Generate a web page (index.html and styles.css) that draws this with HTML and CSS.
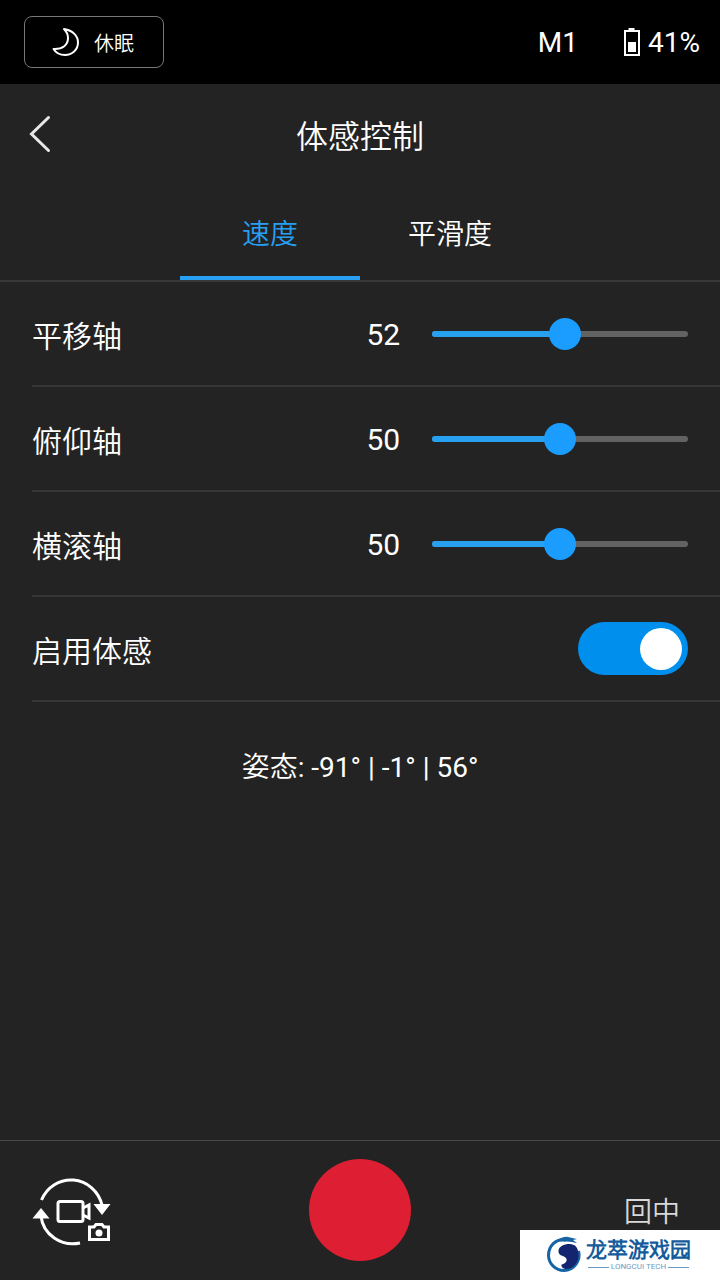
FILE: index.html
```html
<!DOCTYPE html>
<html lang="zh-CN">
<head>
<meta charset="utf-8">
<meta name="viewport" content="width=device-width, initial-scale=1">
<title>体感控制</title>
<link rel="stylesheet" href="styles.css">
</head>
<body class="app">
  <header class="status">
    <button class="sleep" type="button">
      <svg class="sleep-icon" viewBox="0 0 28 30" aria-hidden="true"><path d="M12 2C21 3.500 26 9 26 15.500C26 23 20 28 13 28C8 28 4 26 1.500 22C10 22.500 16 18.500 16 11C16 7.500 14.500 4.500 12 2Z"/></svg>
      <span>休眠</span>
    </button>
    <div class="device">
      <span>M1</span>
      <span class="battery">
        <svg class="battery-icon" viewBox="0 0 16 28" aria-hidden="true"><path d="M4.500 0h6v2.500h-6z"/><path fill-rule="evenodd" d="M0 2h16v26H0zM2 4v22h12V4z"/><path d="M4 14h8v10H4z"/></svg>
        <span>41%</span>
      </span>
    </div>
  </header>

  <div class="titlebar">
    <button class="back" type="button" aria-label="返回">
      <svg class="back-icon" viewBox="0 0 22 38" aria-hidden="true"><path d="M19.500 2.500L2.500 19L19.500 35.500"/></svg>
    </button>
    <h1 class="title">体感控制</h1>
  </div>

  <nav class="tabs">
    <button class="tab tab-active" type="button">速度</button>
    <button class="tab" type="button">平滑度</button>
  </nav>

  <main class="content">
    <div class="settings">
      <div class="row">
        <label class="label" for="pan">平移轴</label>
        <output class="value" for="pan">52</output>
        <div class="slider">
          <div class="rail"><div class="fill" style="width: 52%"></div></div>
          <input class="range" id="pan" type="range" min="0" max="100" value="52">
        </div>
      </div>
      <div class="row">
        <label class="label" for="tilt">俯仰轴</label>
        <output class="value" for="tilt">50</output>
        <div class="slider">
          <div class="rail"><div class="fill" style="width: 50%"></div></div>
          <input class="range" id="tilt" type="range" min="0" max="100" value="50">
        </div>
      </div>
      <div class="row">
        <label class="label" for="roll">横滚轴</label>
        <output class="value" for="roll">50</output>
        <div class="slider">
          <div class="rail"><div class="fill" style="width: 50%"></div></div>
          <input class="range" id="roll" type="range" min="0" max="100" value="50">
        </div>
      </div>
      <div class="row">
        <label class="label" for="motion">启用体感</label>
        <input class="switch" id="motion" type="checkbox" checked>
      </div>
    </div>
    <p class="attitude">姿态<span class="angles">: -91° | -1° | 56°</span></p>
  </main>

  <footer class="controls">
    <button class="mode" type="button" aria-label="切换拍照和录像">
      <svg class="mode-icon" viewBox="0 0 80 74" aria-hidden="true">
        <g class="stroke">
          <path d="M9.500 27A32 33 0 0 1 70 32"/>
          <path d="M9 43A32 31 0 0 0 48 70"/>
          <rect x="26" y="28.500" width="25" height="20" rx="2"/>
          <path d="M51 35L57 32V45L51 42"/>
          <path d="M57.500 54H62L64 51.500H70L72 54H76.500V66.500H57.500Z"/>
        </g>
        <path class="solid" d="M61.500 31H78.500L70 42Z"/>
        <path class="solid" d="M.5 45.500H17.500L9 35Z"/>
        <circle class="solid" cx="67" cy="60" r="3.500"/>
      </svg>
    </button>
    <button class="record" type="button" aria-label="录制"></button>
    <button class="recenter" type="button">回中</button>
  </footer>

  <aside class="brand">
    <svg class="brand-icon" viewBox="0 0 36 38" aria-hidden="true">
      <path class="brand-ring" d="M20 4C10 2 2.500 10 2.500 19.500A15.500 15.500 0 0 0 18 34.500A15.500 15.500 0 0 0 32.500 15"/>
      <path class="brand-core" d="M31 12C35 21 31 32 21 33C17 33 15 31 15.500 28.500C19 28 22 25 20 22C17 19 12 20 12.500 14.500C13 8.500 24 6 29 9.500Z"/>
      <path class="brand-head" d="M10 5C16 1 20 0 24 1.500L31 3L27 4L31 7C24 5 18 6 10 5Z"/>
    </svg>
    <div class="brand-text">
      <span class="brand-name">龙萃游戏园</span>
      <span class="brand-sub">LONGCUI TECH</span>
    </div>
  </aside>
</body>
</html>
```
FILE: styles.css
```css
* {
  box-sizing: border-box;
}

.app {
  display: flex;
  flex-direction: column;
  min-height: 100vh;
  margin: 0;
  background: #232323;
  color: #fff;
  font-family: Roboto, "Noto Sans CJK SC DemiLight", "Noto Sans CJK SC", sans-serif;
  font-size: 30px;
  font-weight: 350;
}

button {
  padding: 0;
  border: 0;
  background: none;
  color: inherit;
  font: inherit;
}

svg {
  display: block;
}

.status {
  display: flex;
  align-items: center;
  justify-content: space-between;
  height: 84px;
  padding: 0 20px 0 24px;
  background: #000;
}

.sleep {
  display: flex;
  align-items: center;
  justify-content: center;
  gap: 14px;
  width: 140px;
  height: 52px;
  padding-right: 2px;
  border: 1px solid #777;
  border-radius: 8px;
  font-size: 20px;
}

.sleep-icon {
  width: 28px;
  height: 30px;
  fill: none;
  stroke: #fff;
  stroke-width: 2;
  stroke-linejoin: round;
}

.device {
  display: flex;
  align-items: center;
  gap: 46px;
  font-size: 28px;
  font-weight: 400;
}

.battery {
  display: flex;
  align-items: center;
  gap: 8px;
}

.battery-icon {
  width: 16px;
  height: 28px;
  fill: #fff;
}

.titlebar {
  display: grid;
  grid-template-columns: 1fr auto 1fr;
  align-items: center;
  height: 100px;
  padding: 0 29px;
}

.back {
  justify-self: start;
}

.back-icon {
  width: 22px;
  height: 38px;
  fill: none;
  stroke: #e8e8e8;
  stroke-width: 3;
  stroke-linecap: round;
}

.title {
  margin: 0;
  font-size: 32px;
  font-weight: 350;
}

.tabs {
  display: flex;
  justify-content: center;
  height: 98px;
  border-bottom: 2px solid #383838;
}

.tab {
  width: 25%;
  padding-top: 4px;
  border-bottom: 4px solid transparent;
  font-size: 28px;
}

.tab-active {
  border-color: #27a0f4;
  color: #27a0f4;
}

.content {
  flex: 1;
}

.settings {
  padding-left: 32px;
}

.row {
  display: flex;
  align-items: center;
  height: 105px;
  padding-right: 32px;
  border-bottom: 2px solid #363636;
}

.label {
  flex: 1;
}

.value {
  margin-right: 32px;
  padding-top: 2px;
  font-weight: 400;
}

.slider {
  display: grid;
  align-items: center;
  width: 39%;
}

.rail {
  grid-area: 1 / 1;
  height: 6px;
  border-radius: 3px;
  background: #626262;
  overflow: hidden;
}

.fill {
  height: 100%;
  background: #27a0f0;
}

.range {
  grid-area: 1 / 1;
  height: 32px;
  margin: 0 -16px;
  appearance: none;
  background: none;
}

.range::-webkit-slider-thumb {
  width: 32px;
  height: 32px;
  border: 0;
  border-radius: 50%;
  appearance: none;
  background: #1a9dff;
}

.switch {
  display: flex;
  align-items: center;
  justify-content: flex-end;
  width: 110px;
  height: 53px;
  margin: 0;
  padding: 0 6px;
  border-radius: 27px;
  appearance: none;
  background: #008fec;
}

.switch::before {
  width: 42px;
  height: 42px;
  border-radius: 50%;
  background: #fff;
  content: "";
}

.attitude {
  margin: 45px 0;
  font-size: 28px;
  line-height: 42px;
  text-align: center;
}

.angles {
  font-weight: 400;
}

.controls {
  display: grid;
  grid-template-columns: 1fr auto 1fr;
  align-items: center;
  height: 140px;
  padding: 0 32px 2px;
  border-top: 1px solid #484848;
}

.mode {
  justify-self: start;
}

.mode-icon {
  width: 80px;
  height: 74px;
}

.stroke {
  fill: none;
  stroke: #fff;
  stroke-width: 3;
}

.solid {
  fill: #fff;
}

.record {
  width: 102px;
  height: 102px;
  border-radius: 50%;
  background: #de1e32;
}

.recenter {
  justify-self: end;
  padding-right: 8px;
  color: #d8d8d8;
  font-size: 28px;
}

.brand {
  position: fixed;
  right: 0;
  bottom: 0;
  display: flex;
  align-items: center;
  gap: 4px;
  width: 200px;
  height: 50px;
  padding-left: 26px;
  background: #fff;
  color: #145b9c;
}

.brand-icon {
  width: 36px;
  height: 38px;
}

.brand-ring {
  fill: none;
  stroke: #1764a5;
  stroke-width: 3;
}

.brand-core {
  fill: #15246e;
}

.brand-head {
  fill: #1764a5;
}

.brand-text {
  display: flex;
  flex-direction: column;
}

.brand-name {
  font-size: 21px;
  font-weight: 700;
  line-height: 24px;
}

.brand-sub {
  display: flex;
  align-items: center;
  gap: 2px;
  padding: 0 2px;
  color: #6c9cc4;
  font-size: 8px;
  font-weight: 400;
  line-height: 10px;
  white-space: nowrap;
}

.brand-sub::before,
.brand-sub::after {
  flex: 1;
  height: 1px;
  background: #6c9cc4;
  content: "";
}
```
